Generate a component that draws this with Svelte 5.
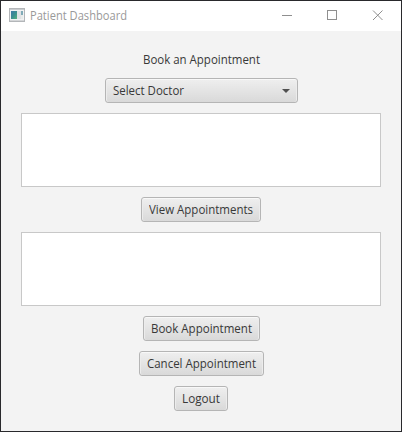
<script>
  let rows = $state([]);
  const actions = [
    { label: 'Book Appointment', width: 117, text: 101 },
    { label: 'Cancel Appointment', width: 125, text: 109 },
    { label: 'Logout', width: 54, text: 38 }
  ];

  // Scales a label horizontally so that it fills its nominal width.
  function fit(node, width) {
    const natural = node.getBoundingClientRect().width;
    node.style.transform = `scaleX(${width / natural})`;
  }
</script>

<div class="window">
  <header>
    <svg class="app" width="16" height="14" viewBox="0 0 16 14" shape-rendering="crispEdges">
      <defs>
        <linearGradient id="screen" x1="0" y1="0" x2="1" y2="1">
          <stop offset="0" stop-color="#3f79a8" />
          <stop offset="0.5" stop-color="#3c8f91" />
          <stop offset="1" stop-color="#57b37c" />
        </linearGradient>
      </defs>
      <rect x="0.5" y="0.5" width="15" height="13" fill="#f1f2f3" stroke="#b3b6b9" />
      <rect x="1" y="1" width="14" height="1" fill="#c9cccf" />
      <rect x="2" y="3" width="6" height="8" fill="url(#screen)" />
      <rect x="8" y="3" width="4" height="8" fill="#e0e2e5" />
      <rect x="12" y="3" width="2" height="4" fill="#80abb8" />
      <rect x="12" y="7" width="2" height="4" fill="#e8ebea" />
      <rect x="1" y="12" width="14" height="1" fill="#d4d6d8" />
    </svg>
    <span class="title"><span class="fit" use:fit={97}>Patient Dashboard</span></span>
    <svg class="controls" width="138" height="30" viewBox="0 0 138 30" fill="none" stroke="#8f8f8f">
      <path d="M19 14.5H29" />
      <rect x="64.5" y="9.5" width="9" height="9" />
      <path d="M110 9.5l9.5 9.5M119.5 9.5L110 19" />
    </svg>
  </header>
  <main>
    <div class="caption"><span class="fit" use:fit={117}>Book an Appointment</span></div>
    <button class="combo">
      <span class="fit" use:fit={71}>Select Doctor</span>
      <svg width="8" height="4" viewBox="0 0 8 4"><path d="M0 0H8L4 4Z" fill="#505050" /></svg>
    </button>
    <div class="list">{#each rows as row}<p>{row}</p>{/each}</div>
    <button style:width="120px"><span class="fit" use:fit={104}>View Appointments</span></button>
    <div class="list"></div>
    {#each actions as action}
      <button style:width="{action.width}px">
        <span class="fit" use:fit={action.text}>{action.label}</span>
      </button>
    {/each}
  </main>
</div>

<style>
  .window {
    box-sizing: border-box;
    width: 402px;
    height: 432px;
    border: 1px solid #29292c;
    background: #f3f3f3;
    font: 12px/17px "Open Sans", "Noto Sans", sans-serif;
    color: #383838;
    display: flex;
    flex-direction: column;
  }
  header {
    height: 30px;
    flex: none;
    display: flex;
    align-items: center;
    background: #fff;
    color: #999;
  }
  .app { margin-left: 8px; margin-bottom: 2px; }
  .title { flex: 1; margin-left: 5px; padding-bottom: 2px; }
  .fit {
    display: inline-block;
    white-space: nowrap;
    transform-origin: 0 50%;
  }
  main {
    display: flex;
    flex-direction: column;
    align-items: center;
    gap: 10px;
    padding: 20px 20px 0;
  }
  .caption { width: 117px; height: 17px; white-space: nowrap; }
  button {
    box-sizing: border-box;
    height: 25px;
    padding: 0 0 0 7px;
    border: 1px solid #b5b5b5;
    border-radius: 3px;
    background: linear-gradient(#efefef, #d9d9d9);
    box-shadow: inset 0 1px #f8f8f8, inset 1px 0 #ececec, inset -1px 0 #ececec;
    font: inherit;
    color: inherit;
    text-align: left;
    display: flex;
    align-items: center;
  }
  .combo {
    width: 193px;
    justify-content: space-between;
    padding-right: 7px;
  }
  .list {
    box-sizing: border-box;
    align-self: stretch;
    height: 74px;
    border: 1px solid #c8c8c8;
    background: #fff;
  }
  p { margin: 0; }
</style>
